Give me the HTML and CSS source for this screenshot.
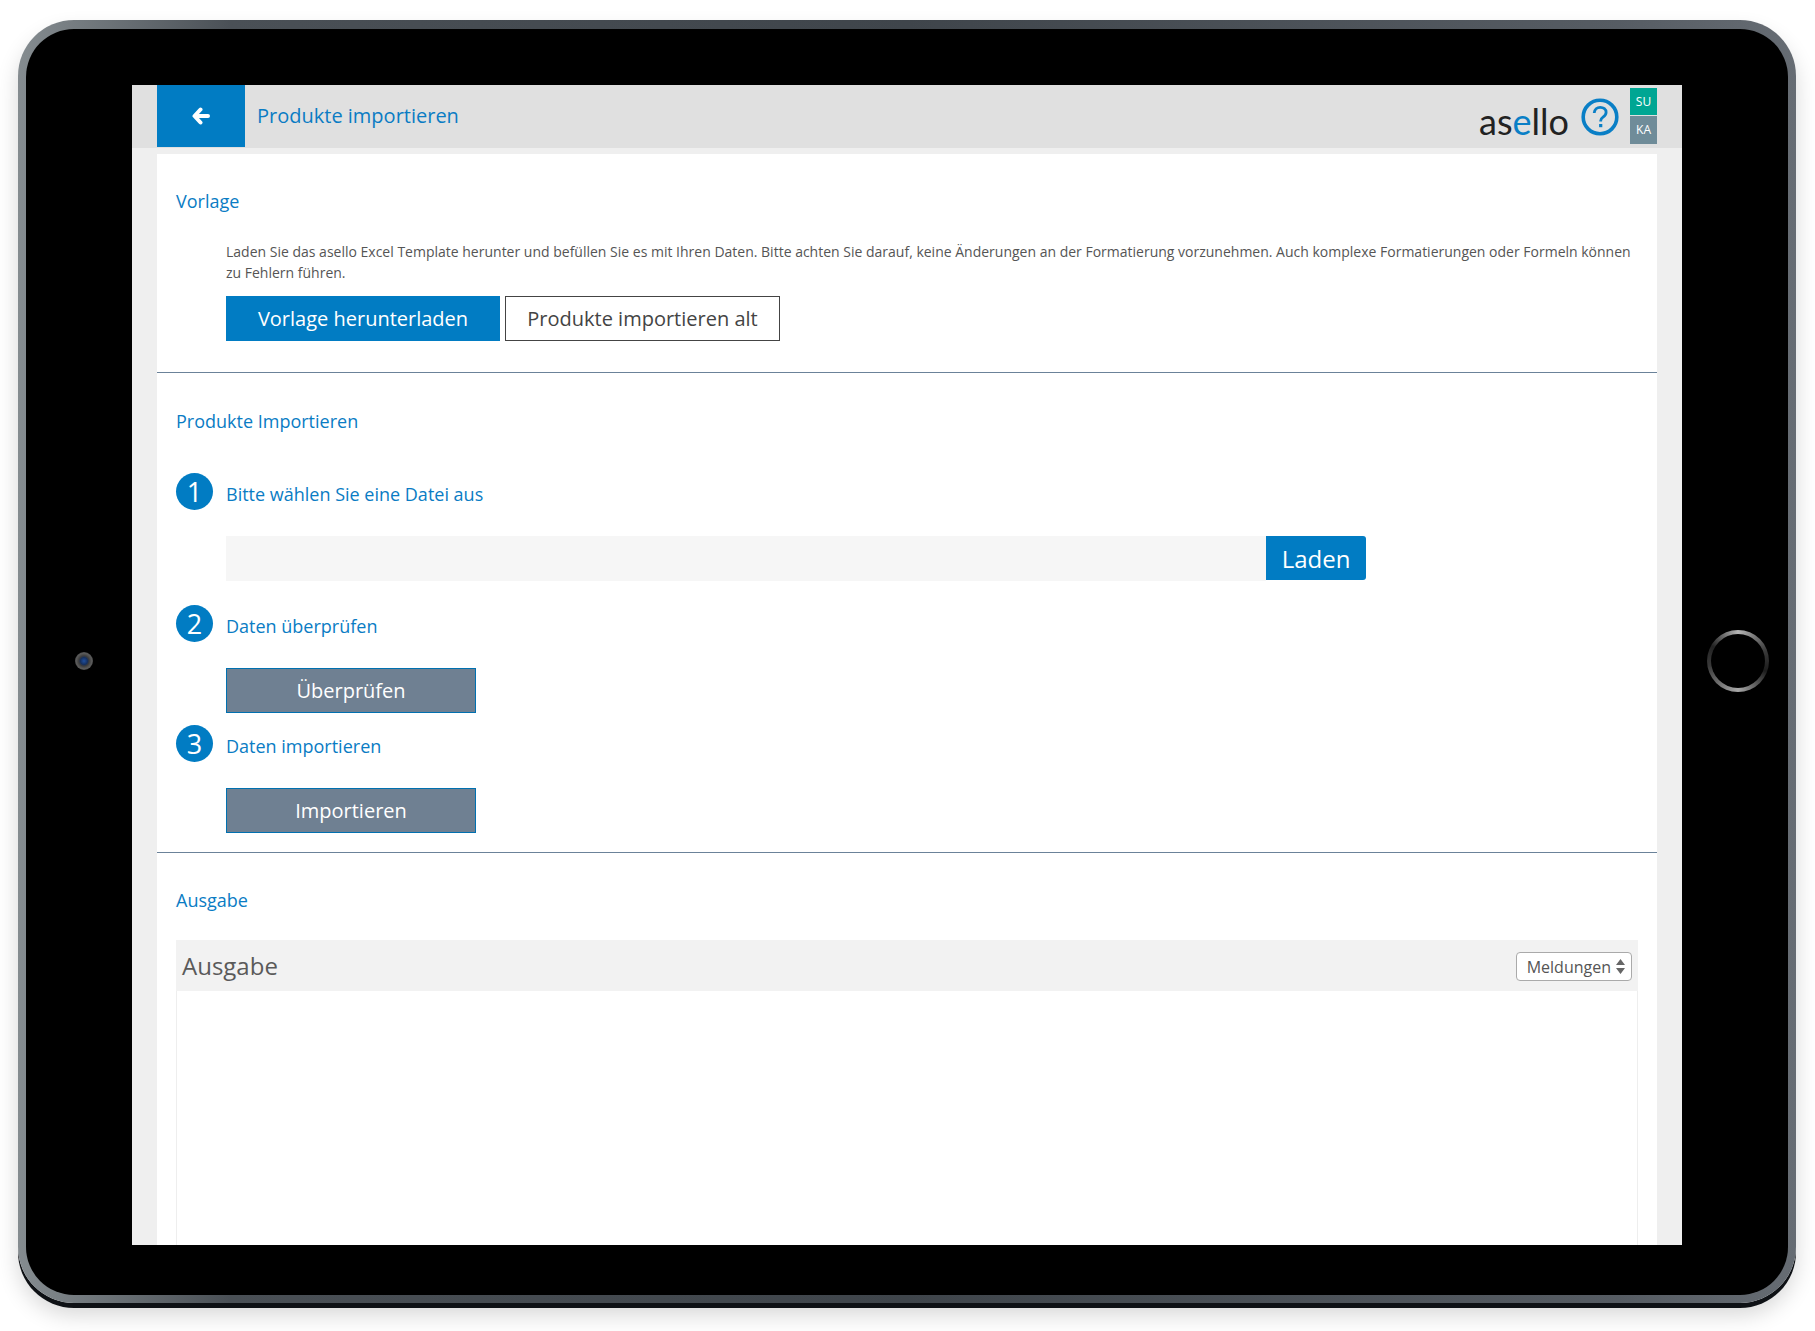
FILE: index.html
```html
<!DOCTYPE html>
<html lang="de">
  <head>
    <meta charset="UTF-8" />
    <title>Produkte importieren</title>
    <link rel="stylesheet" href="styles.css">
  </head>
  <body>
    <div class="device">
      <div class="bezel">
        <div class="camera"></div>
        <div class="screen">
          <header class="topbar">
            <a class="back" href="#">
              <svg width="18" height="18" viewBox="0 0 18 18">
                <path d="M8.5 2.5 2.5 9l6 6.500M3.500 9H16" fill="none" stroke="#fff" stroke-width="4" stroke-linecap="round" stroke-linejoin="round"/>
              </svg>
            </a>
            <h1 class="page-title">Produkte importieren</h1>
            <div class="brand">
              <span class="logo">as<span class="logo-e">e</span>llo</span>
              <svg class="help" width="38" height="38" viewBox="0 0 38 38">
                <circle cx="19" cy="19" r="16.800" fill="none" stroke="#0a7fc6" stroke-width="3.600"/>
                <path d="M13.200 15c.3-3.600 2.900-5.700 6-5.700 3.300 0 5.900 2 5.900 5 0 2.500-1.500 3.700-3.100 4.800-1.500 1-2.300 1.900-2.300 3.700v.7" fill="none" stroke="#0a7fc6" stroke-width="2.800"/>
                <rect x="18.100" y="26" width="3.200" height="3.200" fill="#0a7fc6"/>
              </svg>
              <div class="users">
                <span class="user user-su">SU</span>
                <span class="user user-ka">KA</span>
              </div>
            </div>
          </header>

          <main class="content">
            <section class="section section-template">
              <h2>Vorlage</h2>
              <p class="intro">Laden Sie das asello Excel Template herunter und befüllen Sie es mit Ihren Daten. Bitte achten Sie darauf, keine Änderungen an der Formatierung vorzunehmen. Auch komplexe Formatierungen oder Formeln können zu Fehlern führen.</p>
              <div class="actions">
                <button class="btn btn-primary">Vorlage herunterladen</button>
                <button class="btn btn-outline">Produkte importieren alt</button>
              </div>
            </section>

            <section class="section section-import">
              <h2>Produkte Importieren</h2>

              <div class="step-head">
                <span class="step-num">1</span>
                <span class="step-label">Bitte wählen Sie eine Datei aus</span>
              </div>
              <div class="step-body file-row">
                <div class="file-input"></div>
                <button class="btn-load">Laden</button>
              </div>

              <div class="step-head">
                <span class="step-num">2</span>
                <span class="step-label">Daten überprüfen</span>
              </div>
              <div class="step-body step-body-tight">
                <button class="btn btn-disabled">Überprüfen</button>
              </div>

              <div class="step-head">
                <span class="step-num">3</span>
                <span class="step-label">Daten importieren</span>
              </div>
              <div class="step-body step-body-last">
                <button class="btn btn-disabled">Importieren</button>
              </div>
            </section>

            <section class="section section-output">
              <h2>Ausgabe</h2>
              <div class="panel">
                <div class="panel-head">
                  <span class="panel-title">Ausgabe</span>
                  <div class="filter">
                    <span>Meldungen</span>
                    <svg width="9" height="15" viewBox="0 0 9 15">
                      <path d="M4.500 0 9 6H0zM4.500 15 0 9h9z" fill="#666"/>
                    </svg>
                  </div>
                </div>
                <div class="panel-body"></div>
              </div>
            </section>
          </main>
        </div>
        <div class="home"></div>
      </div>
    </div>
  </body>
</html>
```

FILE: styles.css
```css
* {
  box-sizing: border-box;
  margin: 0;
  padding: 0;
  font-family: "Open Sans", "Liberation Sans", sans-serif;
}

html,
body {
  height: 1331px;
  overflow: hidden;
  background: #fff;
}

/* Tablet frame */
.device {
  width: 1778px;
  height: 1283px;
  margin: 20px 0 0 18px;
  padding: 9px 8px 8px;
  border-radius: 56px;
  background: linear-gradient(90deg, #858c90 0, #4a5056 12%, #3f454b 50%, #565c63 90%, #666c73 100%);
  box-shadow: 0 5px 0 #0e1115, 0 12px 22px rgba(0, 0, 0, 0.16);
}

.bezel {
  display: grid;
  grid-template-columns: 106px 1550px 106px;
  align-items: center;
  height: 100%;
  padding: 56px 0 50px;
  border-radius: 48px;
  background: #000;
}

.camera {
  width: 18px;
  height: 18px;
  margin: 0 0 8px 49px;
  border-radius: 50%;
  background: radial-gradient(circle, #1f4f9e 0, #16305f 28%, #3c3c3c 40%, #5a5a5a 60%, #2a2a2a 100%);
}

.home {
  position: relative;
  width: 62px;
  height: 62px;
  margin: 0 0 8px 25px;
  border-radius: 50%;
  background: conic-gradient(#b5b5b5 0, #3a3a3a 70deg, #1c1c1c 110deg, #a8a8a8 180deg, #3a3a3a 260deg, #222 300deg, #b5b5b5 360deg);
}

.home::after {
  content: "";
  position: absolute;
  inset: 4px;
  border-radius: 50%;
  background: #000;
}

.screen {
  display: flex;
  flex-direction: column;
  height: 1160px;
  overflow: hidden;
  padding: 0 25px;
  background: #efefef;
}

/* Top bar */
.topbar {
  display: flex;
  align-items: flex-start;
  flex-shrink: 0;
  height: 63px;
  margin: 0 -25px;
  padding: 0 25px;
  background: #e0e0e0;
}

.back {
  display: flex;
  align-items: center;
  justify-content: center;
  width: 88px;
  height: 62px;
  background: #017cc3;
}

.page-title {
  margin-left: 12px;
  font-size: 20px;
  font-weight: 400;
  line-height: 62px;
  color: #0a7cc4;
}

.brand {
  display: flex;
  align-items: flex-start;
  margin-left: auto;
}

.logo {
  margin-top: 16px;
  font-family: "Lato", sans-serif;
  font-size: 36px;
  line-height: 40px;
  color: #222;
}

.logo-e {
  font-family: "Lato", sans-serif;
  color: #0a7fc6;
}

.help {
  margin: 13px 11px 0 12px;
}

.users {
  display: flex;
  flex-direction: column;
  gap: 1px;
  margin-top: 3px;
}

.user {
  width: 27px;
  height: 27px;
  font-size: 12px;
  line-height: 28px;
  text-align: center;
  color: #fff;
}

.user-su {
  background: #00a693;
}

.user-ka {
  height: 28px;
  background: #6f8c99;
}

/* Content */
.content {
  display: flex;
  flex-direction: column;
  flex: 1;
  margin-top: 6px;
  background: #fff;
}

.section {
  padding: 35px 19px 0;
  border-bottom: 1px solid #6b8299;
}

.section h2 {
  font-size: 18px;
  font-weight: 400;
  line-height: 24px;
  color: #0a7cc4;
}

.section-template {
  height: 219px;
}

.section-import {
  height: 480px;
  padding-top: 36px;
}

.section-output {
  display: flex;
  flex-direction: column;
  flex: 1;
  border-bottom: none;
}

.intro {
  margin: 28px 0 13px 50px;
  max-width: 1420px;
  font-size: 14px;
  line-height: 21px;
  color: #555;
}

.actions {
  display: flex;
  gap: 5px;
  margin-left: 50px;
}

.btn {
  height: 45px;
  font-size: 20px;
  cursor: pointer;
}

.btn-primary {
  width: 274px;
  border: none;
  background: #017cc3;
  color: #fff;
}

.btn-outline {
  width: 275px;
  border: 1px solid #444;
  background: #fff;
  color: #444;
}

.btn-disabled {
  width: 250px;
  border: 1px solid #0070b0;
  background: #6f8092;
  color: #fff;
}

/* Import steps */
.step-head {
  display: flex;
  gap: 13px;
  margin-top: 40px;
  margin-bottom: 26px;
}

.step-num {
  width: 37px;
  height: 37px;
  border-radius: 50%;
  background: #017cc3;
  font-size: 27px;
  line-height: 37px;
  text-align: center;
  color: #fff;
}

.step-label {
  padding-top: 9px;
  font-size: 18px;
  line-height: 25px;
  color: #0a7cc4;
}

.step-body {
  margin-left: 50px;
  margin-bottom: -16px;
}

.step-body-tight {
  margin-bottom: -28px;
}

.step-body-last {
  margin-bottom: 0;
}

.file-row {
  display: flex;
  align-items: flex-start;
}

.file-input {
  width: 1040px;
  height: 45px;
  background: #f6f6f6;
}

.btn-load {
  width: 100px;
  height: 44px;
  border: none;
  border-radius: 0 3px 3px 0;
  background: #017cc3;
  font-size: 24px;
  color: #fff;
  cursor: pointer;
}

/* Output */
.panel {
  display: flex;
  flex-direction: column;
  flex: 1;
  margin-top: 28px;
}

.panel-head {
  display: flex;
  align-items: center;
  justify-content: space-between;
  height: 51px;
  padding: 0 6px;
  background: #f2f2f2;
}

.panel-title {
  font-size: 24px;
  color: #5a5a5a;
}

.filter {
  display: flex;
  align-items: center;
  gap: 5px;
  height: 29px;
  margin-top: 2px;
  padding: 0 6px 0 10px;
  border: 1px solid #aaa;
  border-radius: 4px;
  background: #fff;
  font-size: 16px;
  color: #555;
}

.panel-body {
  flex: 1;
  border-left: 1px solid #eee;
  border-right: 1px solid #eee;
}
```
